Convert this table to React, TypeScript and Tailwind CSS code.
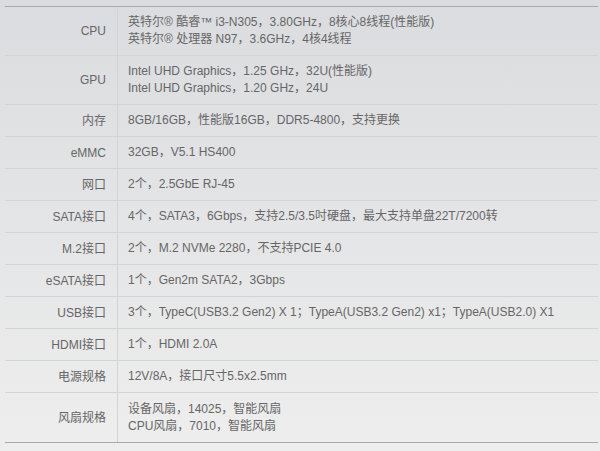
const specs: { label: string; lines: string[] }[] = [
  { label: "CPU", lines: ["英特尔® 酷睿™ i3-N305，3.80GHz，8核心8线程(性能版)", "英特尔® 处理器 N97，3.6GHz，4核4线程"] },
  { label: "GPU", lines: ["Intel UHD Graphics，1.25 GHz，32U(性能版)", "Intel UHD Graphics，1.20 GHz，24U"] },
  { label: "内存", lines: ["8GB/16GB，性能版16GB，DDR5-4800，支持更换"] },
  { label: "eMMC", lines: ["32GB，V5.1 HS400"] },
  { label: "网口", lines: ["2个，2.5GbE RJ-45"] },
  { label: "SATA接口", lines: ["4个，SATA3，6Gbps，支持2.5/3.5吋硬盘，最大支持单盘22T/7200转"] },
  { label: "M.2接口", lines: ["2个，M.2 NVMe 2280，不支持PCIE 4.0"] },
  { label: "eSATA接口", lines: ["1个，Gen2m SATA2，3Gbps"] },
  { label: "USB接口", lines: ["3个，TypeC(USB3.2 Gen2) X 1；TypeA(USB3.2 Gen2) x1；TypeA(USB2.0) X1"] },
  { label: "HDMI接口", lines: ["1个，HDMI 2.0A"] },
  { label: "电源规格", lines: ["12V/8A，接口尺寸5.5x2.5mm"] },
  { label: "风扇规格", lines: ["设备风扇，14025，智能风扇", "CPU风扇，7010，智能风扇"] },
];

export default function App() {
  return (
    <div
      className="w-[600px] h-[451px] overflow-hidden bg-gradient-to-b from-[#dbdcdf] to-[#eeeeee] pt-[6px] pl-[5px] pr-[2px] text-[12px] text-[#666]"
      style={{ fontFamily: '"Liberation Sans", "Noto Sans CJK SC", sans-serif' }}
    >
      <div className="border-t border-b border-[#a9a9ac]">
        {specs.map((row, i) => (
          <div
            key={row.label}
            className={`flex ${row.lines.length > 1 ? "h-[49px]" : "h-[32px]"} ${
              i < specs.length - 1 ? "border-b border-[#d3d4d6]" : ""
            }`}
          >
            <div className="w-[113px] shrink-0 flex items-center justify-end pr-[11px] border-r border-[#d3d4d6] whitespace-nowrap">
              {row.label}
            </div>
            <div className="flex flex-col justify-center pl-[10px] leading-[17px] whitespace-nowrap">
              {row.lines.map((l) => (
                <div key={l}>{l}</div>
              ))}
            </div>
          </div>
        ))}
      </div>
    </div>
  );
}
